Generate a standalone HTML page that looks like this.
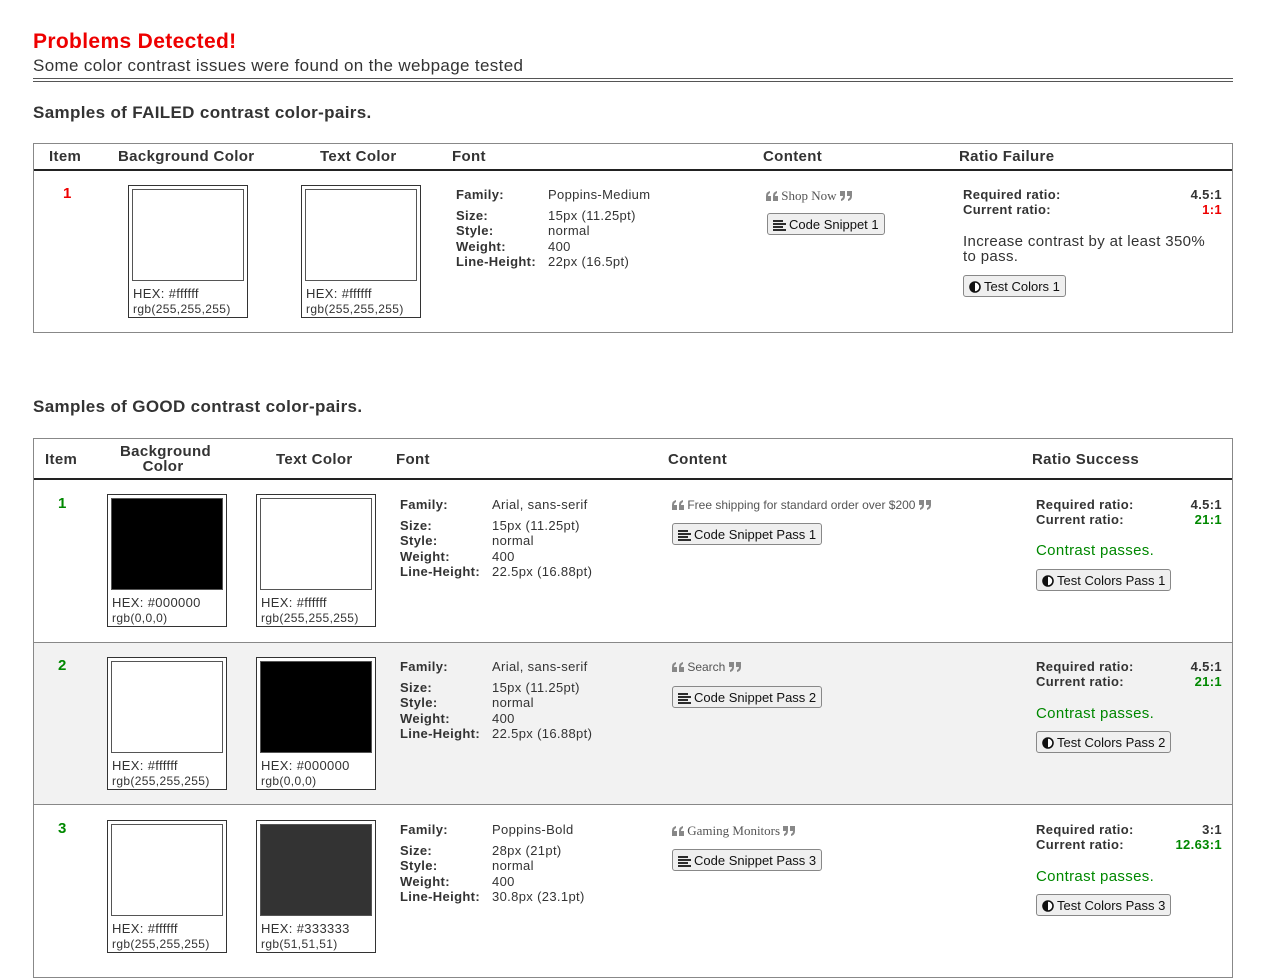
<!DOCTYPE html>
<html><head><meta charset="utf-8"><style>
*{margin:0;padding:0;box-sizing:border-box}
body{width:1270px;height:962px;overflow:hidden;background:#fff;font-family:"Liberation Sans",Tahoma,sans-serif;color:#333;position:relative;letter-spacing:0.35px}
.a{position:absolute;white-space:nowrap}
.h{font-weight:bold;font-size:15px;color:#333}
.sw{position:absolute;width:120px;height:133px;border:1px solid #333;background:#fff}
.sw .in{position:absolute;left:3px;top:3px;width:112px;height:92px;border:1px solid #555}
.sw .t1{position:absolute;left:4px;top:100px;font-size:13px}
.sw .t2{position:absolute;left:4px;top:116px;font-size:12px}
.f{font-size:13px;line-height:15.5px}
.f b{display:inline-block;width:92px}
.btn{position:absolute;height:22px;border:1px solid #888;border-radius:3px;background:#efefef;font-size:13px;padding:3px 5px 0 5px;white-space:nowrap;color:#111;letter-spacing:0}
.btn svg{vertical-align:-2px;margin-right:3px}
.q{font-size:12px;color:#555;letter-spacing:0}
.q svg{vertical-align:-1px}
.r{font-size:13px;font-weight:bold;line-height:15px}
</style></head><body>
<svg width="0" height="0" style="position:absolute"><defs>
<symbol id="lq" viewBox="0 0 12 10"><path d="M0 10V5Q0 1 4 0V2Q2 3 2 5H5V10ZM7 10V5Q7 1 11 0V2Q9 3 9 5H12V10Z" fill="#888"/></symbol>
<symbol id="rq" viewBox="0 0 12 10"><path d="M0 0H5V5Q5 9 1 10V8Q3 7 3 5H0ZM7 0H12V5Q12 9 8 10V8Q10 7 10 5H7Z" fill="#888"/></symbol>
<symbol id="ls" viewBox="0 0 13 11"><path d="M0 1H10M0 4H13M0 7H10M0 10H13" stroke="#111" stroke-width="1.7"/></symbol>
<symbol id="hc" viewBox="0 0 12 12"><circle cx="6" cy="6" r="5" fill="#fff" stroke="#111" stroke-width="1.6"/><path d="M6 1A5 5 0 0 0 6 11Z" fill="#111"/></symbol>
</defs></svg>
<div class="a" style="left:33px;top:30px;font-size:21px;font-weight:bold;color:#e00">Problems Detected!</div>
<div class="a" style="left:33px;top:56px;font-size:17px;color:#333">Some color contrast issues were found on the webpage tested</div>
<div class="a" style="left:33px;top:78px;width:1200px;height:4px;border-top:1px solid #555;border-bottom:1px solid #555"></div>
<div class="a" style="left:33px;top:103px;font-size:17px;font-weight:bold">Samples of FAILED contrast color-pairs.</div>

<div class="a" style="left:33px;top:143px;width:1200px;height:190px;border:1px solid #888"></div>
<div class="a" style="left:34px;top:169px;width:1198px;height:2px;background:#222"></div>
<div class="a h" style="left:49px;top:148px">Item</div>
<div class="a h" style="left:118px;top:148px">Background Color</div>
<div class="a h" style="left:320px;top:148px">Text Color</div>
<div class="a h" style="left:452px;top:148px">Font</div>
<div class="a h" style="left:763px;top:148px">Content</div>
<div class="a h" style="left:959px;top:148px">Ratio Failure</div>
<div class="a" style="left:63px;top:185px;color:#e00;font-weight:bold;font-size:15px">1</div>
<div class="sw" style="left:128px;top:185px"><div class="in"></div><div class="t1">HEX: #ffffff</div><div class="t2">rgb(255,255,255)</div></div>
<div class="sw" style="left:301px;top:185px"><div class="in"></div><div class="t1">HEX: #ffffff</div><div class="t2">rgb(255,255,255)</div></div>
<div class="a f" style="left:456px;top:187px"><b>Family:</b>Poppins-Medium<br><div style="height:5px"></div><b>Size:</b>15px (11.25pt)<br><b>Style:</b>normal<br><b>Weight:</b>400<br><b>Line-Height:</b>22px (16.5pt)</div>
<div class="a q" style="left:766px;top:188px;font-family:'Liberation Serif',serif;font-size:13px"><svg width="12" height="10"><use href="#lq"/></svg> Shop Now <svg width="12" height="10"><use href="#rq"/></svg></div>
<div class="btn" style="left:767px;top:213px"><svg width="13" height="11"><use href="#ls"/></svg>Code Snippet 1</div>
<div class="a r" style="left:963px;top:187px;width:259px">Required ratio:<span style="float:right">4.5:1</span><br>Current ratio:<span style="float:right;color:#e00">1:1</span></div>
<div class="a" style="left:963px;top:234px;font-size:15px;line-height:15px">Increase contrast by at least 350%<br>to pass.</div>
<div class="btn" style="left:963px;top:275px"><svg width="12" height="12"><use href="#hc"/></svg>Test Colors 1</div>

<div class="a" style="left:33px;top:397px;font-size:17px;font-weight:bold">Samples of GOOD contrast color-pairs.</div>
<div class="a" style="left:33px;top:438px;width:1200px;height:540px;border:1px solid #888"></div>
<div class="a" style="left:34px;top:478px;width:1198px;height:2px;background:#222"></div>
<div class="a" style="left:34px;top:642px;width:1198px;height:163px;background:#f2f2f2;border-top:1px solid #888;border-bottom:1px solid #888"></div>
<div class="a h" style="left:45px;top:451px">Item</div>
<div class="a h" style="left:120px;top:444px;line-height:15px">Background<br>&nbsp;&nbsp;&nbsp;&nbsp;&nbsp;Color</div>
<div class="a h" style="left:276px;top:451px">Text Color</div>
<div class="a h" style="left:396px;top:451px">Font</div>
<div class="a h" style="left:668px;top:451px">Content</div>
<div class="a h" style="left:1032px;top:451px">Ratio Success</div>

<div class="a" style="left:58px;top:495px;color:#080;font-weight:bold;font-size:15px">1</div>
<div class="sw" style="left:107px;top:494px"><div class="in" style="background:#000"></div><div class="t1">HEX: #000000</div><div class="t2">rgb(0,0,0)</div></div>
<div class="sw" style="left:256px;top:494px"><div class="in"></div><div class="t1">HEX: #ffffff</div><div class="t2">rgb(255,255,255)</div></div>
<div class="a f" style="left:400px;top:497px"><b>Family:</b>Arial, sans-serif<br><div style="height:5px"></div><b>Size:</b>15px (11.25pt)<br><b>Style:</b>normal<br><b>Weight:</b>400<br><b>Line-Height:</b>22.5px (16.88pt)</div>
<div class="a q" style="left:672px;top:498px"><svg width="12" height="10"><use href="#lq"/></svg> Free shipping for standard order over $200 <svg width="12" height="10"><use href="#rq"/></svg></div>
<div class="btn" style="left:672px;top:523px"><svg width="13" height="11"><use href="#ls"/></svg>Code Snippet Pass 1</div>
<div class="a r" style="left:1036px;top:497px;width:186px">Required ratio:<span style="float:right">4.5:1</span><br>Current ratio:<span style="float:right;color:#080">21:1</span></div>
<div class="a" style="left:1036px;top:542px;font-size:15px;color:#080">Contrast passes.</div>
<div class="btn" style="left:1036px;top:569px"><svg width="12" height="12"><use href="#hc"/></svg>Test Colors Pass 1</div>

<div class="a" style="left:58px;top:657px;color:#080;font-weight:bold;font-size:15px">2</div>
<div class="sw" style="left:107px;top:657px"><div class="in"></div><div class="t1">HEX: #ffffff</div><div class="t2">rgb(255,255,255)</div></div>
<div class="sw" style="left:256px;top:657px"><div class="in" style="background:#000"></div><div class="t1">HEX: #000000</div><div class="t2">rgb(0,0,0)</div></div>
<div class="a f" style="left:400px;top:659px"><b>Family:</b>Arial, sans-serif<br><div style="height:5px"></div><b>Size:</b>15px (11.25pt)<br><b>Style:</b>normal<br><b>Weight:</b>400<br><b>Line-Height:</b>22.5px (16.88pt)</div>
<div class="a q" style="left:672px;top:660px"><svg width="12" height="10"><use href="#lq"/></svg> Search <svg width="12" height="10"><use href="#rq"/></svg></div>
<div class="btn" style="left:672px;top:686px"><svg width="13" height="11"><use href="#ls"/></svg>Code Snippet Pass 2</div>
<div class="a r" style="left:1036px;top:659px;width:186px">Required ratio:<span style="float:right">4.5:1</span><br>Current ratio:<span style="float:right;color:#080">21:1</span></div>
<div class="a" style="left:1036px;top:705px;font-size:15px;color:#080">Contrast passes.</div>
<div class="btn" style="left:1036px;top:731px"><svg width="12" height="12"><use href="#hc"/></svg>Test Colors Pass 2</div>

<div class="a" style="left:58px;top:820px;color:#080;font-weight:bold;font-size:15px">3</div>
<div class="sw" style="left:107px;top:820px"><div class="in"></div><div class="t1">HEX: #ffffff</div><div class="t2">rgb(255,255,255)</div></div>
<div class="sw" style="left:256px;top:820px"><div class="in" style="background:#333"></div><div class="t1">HEX: #333333</div><div class="t2">rgb(51,51,51)</div></div>
<div class="a f" style="left:400px;top:822px"><b>Family:</b>Poppins-Bold<br><div style="height:5px"></div><b>Size:</b>28px (21pt)<br><b>Style:</b>normal<br><b>Weight:</b>400<br><b>Line-Height:</b>30.8px (23.1pt)</div>
<div class="a q" style="left:672px;top:823px;font-family:'Liberation Serif',serif;font-size:13px"><svg width="12" height="10"><use href="#lq"/></svg> Gaming Monitors <svg width="12" height="10"><use href="#rq"/></svg></div>
<div class="btn" style="left:672px;top:849px"><svg width="13" height="11"><use href="#ls"/></svg>Code Snippet Pass 3</div>
<div class="a r" style="left:1036px;top:822px;width:186px">Required ratio:<span style="float:right">3:1</span><br>Current ratio:<span style="float:right;color:#080">12.63:1</span></div>
<div class="a" style="left:1036px;top:868px;font-size:15px;color:#080">Contrast passes.</div>
<div class="btn" style="left:1036px;top:894px"><svg width="12" height="12"><use href="#hc"/></svg>Test Colors Pass 3</div>
</body></html>
